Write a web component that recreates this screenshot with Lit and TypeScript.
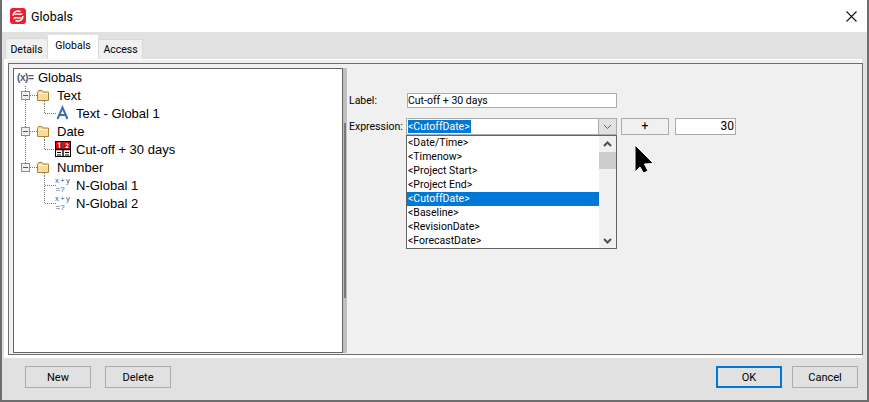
import { LitElement, html, css, svg } from "lit";
import { customElement } from "lit/decorators.js";

const folder = svg`<g transform="translate(37,4)"><path d="M.5 2.5 L1.5 .5 H5 L6 2 H11.5 V10.5 H.5 Z" fill="#f7dc9a" stroke="#a9823c"/><path d="M1.5 3.5 H10.5" stroke="#fff6d8"/></g>`;
const hd = (x1: number, x2: number, y: number) => svg`<line x1=${x1} x2=${x2} y1=${y + 0.5} y2=${y + 0.5} stroke="#777" stroke-dasharray="1 1"/>`;
const vd = (x: number, y1: number, y2: number) => svg`<line x1=${x + 0.5} x2=${x + 0.5} y1=${y1} y2=${y2} stroke="#777" stroke-dasharray="1 1"/>`;

const folderGutter = (down: boolean) => svg`
  ${vd(25, 0, down ? 18 : 5)}
  ${hd(30, 37, 9)}
  <rect x="21.5" y="5.5" width="8" height="8" fill="#eef0f4" stroke="#8a8f99"/>
  <line x1="23" x2="28" y1="9.5" y2="9.5" stroke="#3a5a9a"/>
  ${folder}
  ${vd(44, 15, 18)}`;

const leafGutter = (trunk: boolean, cont: boolean) => svg`
  ${trunk ? vd(25, 0, 18) : ""}
  ${vd(44, 0, cont ? 18 : 9)}
  ${hd(45, 56, 9)}`;

const textIcon = html`<svg class="ico" viewBox="0 0 16 16" width="16" height="16"><path d="M2.5 14 L7.5 2.5 L12.5 14 M4.6 10 H10.4" fill="none" stroke="#3c6cb0" stroke-width="2"/></svg>`;
const dateIcon = html`<svg class="ico" viewBox="0 0 16 16" width="16" height="16"><rect x=".5" y=".5" width="15" height="15" fill="#fff" stroke="#000"/><rect x="1" y="1" width="6" height="7" fill="#e8000c"/><rect x="9" y="1" width="6" height="7" fill="#e8000c"/><path d="M8 0V16M0 8.5H16" stroke="#000" stroke-width="1.4"/><path d="M3 3 L4.5 2 V7" fill="none" stroke="#fff" stroke-width="1.2"/><path d="M10.5 3 H13 V4.5 L10.5 6.5 H13.5" fill="none" stroke="#fff"/><path d="M2 11.5H6M2 14H6M10 11.5H14M10 14H14" stroke="#000"/></svg>`;
const numIcon = html`<svg class="ico" viewBox="0 0 16 18" width="16" height="18"><g fill="#2f5f96" font-family="Liberation Sans, sans-serif" font-size="7.8"><text x="0" y="7" textLength="15">x+y</text><text x="0.5" y="16" textLength="9">=?</text></g></svg>`;

@customElement("app-root")
export class AppRoot extends LitElement {
  static styles = css`
    :host { display: block; width: 869px; height: 402px; overflow: hidden; font-family: Roboto, "Open Sans", sans-serif; color: #000; }
    .win { box-sizing: border-box; width: 869px; height: 402px; border: solid #6e6e6e; border-width: 0 2px 2px 2px; background: #e1e1e1; display: flex; flex-direction: column; position: relative; }
    .title { height: 32px; background: #fff; display: flex; align-items: center; padding-left: 8px; gap: 5px; font-size: 12.5px; flex: none; }
    .title svg.logo { flex: none; }
    .title .sp { flex: 1; }
    .title .x { margin-right: 10px; display: block; }
    .tabs { height: 27px; flex: none; display: flex; align-items: flex-end; padding-left: 3px; font-size: 10.5px; }
    .tab { box-sizing: border-box; background: #f0f0f0; border: 1px solid #d9d9d9; border-bottom: 0; height: 21px; display: flex; align-items: center; justify-content: center; }
    .tab.d { width: 43px; }
    .tab.g { width: 50px; height: 24px; background: #fff; border-color: #fff; padding-bottom: 4px; }
    .tab.a { width: 45px; height: 20px; }
    .outer { box-sizing: border-box; height: 299px; width: 858px; margin-left: 2px; background: #f0f0f0; border: 1px solid #fff; border-width: 1px 3px 3px 4px; position: relative; padding: 3px 0 0 0; flex: none; }
    .frame { box-sizing: border-box; height: 292px; width: 855px; border: 1px solid #6e6e6e; background: #f0f0f0; padding: 4px 0 1px 4px; display: flex; }
    .tree { box-sizing: border-box; width: 330px; flex: none; background: #fff; border: 1px solid #646464; font-family: "Liberation Sans", sans-serif; font-size: 13px; }
    .row { height: 18px; display: flex; align-items: center; position: relative; white-space: nowrap; }
    .row:first-child { margin-top: -1px; }
    .gut { position: absolute; left: 0; top: 0; }
    .row .label { margin-left: 43px; }
    .row.root { padding-left: 3px; }
    .row.root .label { margin-left: 5px; }
    .row.leaf { padding-left: 41px; }
    .row.leaf .label { margin-left: 5px; }
    .row.leaf .ico { position: relative; flex: none; }
    .root-ico { font-family: "Liberation Sans", sans-serif; font-size: 10px; font-weight: bold; color: #4a5a78; width: 16px; letter-spacing: -0.4px; }
    .split { width: 4px; flex: none; background: #c0c0c0; position: relative; }
    .split .h { display: block; width: 2px; height: 175px; margin: 55px 0 0 1px; background: #7a7a7a; }
    .form { flex: 1; position: relative; font-size: 10.5px; display: grid; grid-template-columns: 57px 211px 4px 48px 6px 61px; grid-template-rows: 15px 10px 17px; align-content: start; padding: 25px 0 0 2px; }
    .lbl { align-self: center; }
    .inp { box-sizing: border-box; border: 1px solid #ababab; background: #fff; line-height: 13px; padding: 0; white-space: nowrap; }
    .span5 { grid-column: 2 / 3; margin-left: 1px; }
    .gap { grid-column: 1 / -1; }
    .combo { box-sizing: border-box; border: 1px solid #ababab; background: #fff; display: flex; height: 17px; align-items: stretch; position: relative; }
    .combo .val { background: #0078d7; color: #fff; margin: 1px 0 1px 1px; padding: 0 1px 0 0; line-height: 13px; }
    .combo .fill { flex: 1; }
    .combo .arrow { width: 17px; background: #e1e1e1; border-left: 1px solid #ababab; display: flex; align-items: center; justify-content: center; }
    .list { box-sizing: border-box; position: absolute; left: -1px; top: 16px; width: 211px; height: 114px; border: 1px solid #646464; background: #fff; display: flex; z-index: 2; }
    .opts { flex: 1; }
    .opt { height: 14px; line-height: 14px; padding-left: 1px; white-space: nowrap; }
    .opt.sel { background: #0078d7; color: #fff; }
    .sb { width: 17px; background: #f0f0f0; display: flex; flex-direction: column; align-items: center; }
    .sb .thumb { width: 100%; height: 17px; background: #cdcdcd; margin-top: 1px; }
    .sb .up { height: 15px; display: flex; align-items: center; }
    .sb .sp { flex: 1; }
    .sb .down { height: 15px; display: flex; align-items: center; }
    .btnp { box-sizing: border-box; height: 17px; border: 1px solid #ababab; background: #f0f0f0; text-align: center; line-height: 14px; font-size: 12px; }
    .numv { box-sizing: border-box; height: 17px; border: 1px solid #ababab; background: #fff; text-align: right; line-height: 15px; padding-right: 1px; font-size: 12px; }
    .cursor { position: absolute; left: 632px; top: 144px; z-index: 3; }
    .foot { flex: 1; display: flex; padding: 8px 9px 0 23px; font-size: 11px; gap: 14px; }
    .foot .sp { flex: 1; }
    .btn { box-sizing: border-box; width: 66px; height: 22px; border: 1px solid #adadad; background: #e1e1e1; display: flex; align-items: center; justify-content: center; }
    .btn.def { border: 2px solid #0078d7; margin-right: -4px; }
  `;

  render() {
    const opts = ["<Date/Time>", "<Timenow>", "<Project Start>", "<Project End>", "<CutoffDate>", "<Baseline>", "<RevisionDate>", "<ForecastDate>"];
    const gut = (c: unknown) => html`<svg class="gut" width="70" height="18" viewBox="13 0 70 18"><g transform="translate(-1,0)">${c}</g></svg>`;
    const chev = (up: boolean, w = 2) => html`<svg width="9" height="6" viewBox="0 0 9 6"><path d=${up ? "M1 5 L4.5 1.5 L8 5" : "M1 1 L4.5 4.5 L8 1"} fill="none" stroke=${w === 1 ? "#606060" : "#505050"} stroke-width=${w}/></svg>`;
    return html`<div class="win">
      <div class="title">
        <svg class="logo" width="16" height="16" viewBox="0 0 16 16"><rect width="16" height="16" rx="3" fill="#e8222f"/><path d="M3 8 C3 4 7 2 10.5 3.5 M13 8 C13 12 9 14 5.5 12.5 M4.5 6.5 C7 5 10 7.5 12.5 5.5 M11.5 9.5 C9 11 6 8.5 3.5 10.5" fill="none" stroke="#fff" stroke-width="1.4"/></svg>
        <span>Globals</span><span class="sp"></span>
        <svg class="x" width="11" height="11" viewBox="0 0 11 11"><path d="M.5 .5 L10.5 10.5 M10.5 .5 L.5 10.5" stroke="#111" stroke-width="1.1"/></svg>
      </div>
      <div class="tabs"><div class="tab d">Details</div><div class="tab g">Globals</div><div class="tab a">Access</div></div>
      <div class="outer"><div class="frame">
        <div class="tree">
          <div class="row root"><span class="root-ico">(x)=</span><span class="label">Globals</span></div>
          <div class="row">${gut(folderGutter(true))}<span class="label">Text</span></div>
          <div class="row leaf">${gut(leafGutter(true, false))}${textIcon}<span class="label">Text - Global 1</span></div>
          <div class="row">${gut(folderGutter(true))}<span class="label">Date</span></div>
          <div class="row leaf">${gut(leafGutter(true, false))}${dateIcon}<span class="label">Cut-off + 30 days</span></div>
          <div class="row">${gut(folderGutter(false))}<span class="label">Number</span></div>
          <div class="row leaf">${gut(leafGutter(false, true))}${numIcon}<span class="label">N-Global 1</span></div>
          <div class="row leaf">${gut(leafGutter(false, false))}${numIcon}<span class="label">N-Global 2</span></div>
        </div>
        <div class="split"><span class="h"></span></div>
        <div class="form">
          <div class="lbl">Label:</div><div class="inp span5">Cut-off + 30 days</div>
          <div class="gap" style="grid-row:2"></div>
          <div class="lbl" style="grid-row:3">Expression:</div>
          <div class="combo" style="grid-row:3;grid-column:2"><span class="val">&lt;CutoffDate&gt;</span><span class="fill"></span><span class="arrow">${chev(false, 1)}</span>
            <div class="list"><div class="opts">${opts.map(o => html`<div class="opt ${o === "<CutoffDate>" ? "sel" : ""}">${o}</div>`)}</div>
              <div class="sb"><span class="up">${chev(true)}</span><span class="thumb"></span><span class="sp"></span><span class="down">${chev(false)}</span></div></div>
          </div>
          <div class="btnp" style="grid-row:3;grid-column:4">+</div>
          <div class="numv" style="grid-row:3;grid-column:6">30</div>
        </div>
      </div></div>
      <div class="foot"><div class="btn">New</div><div class="btn">Delete</div><span class="sp"></span><div class="btn def">OK</div><div class="btn">Cancel</div></div>
      <svg class="cursor" width="22" height="32" viewBox="0 0 22 32"><path d="M1 1 V28 L6 23 L9.5 29 L14 27 L10.5 20 L19.5 19.5 Z" fill="#000" stroke="#fff" stroke-width="1"/></svg>
    </div>`;
  }
}
